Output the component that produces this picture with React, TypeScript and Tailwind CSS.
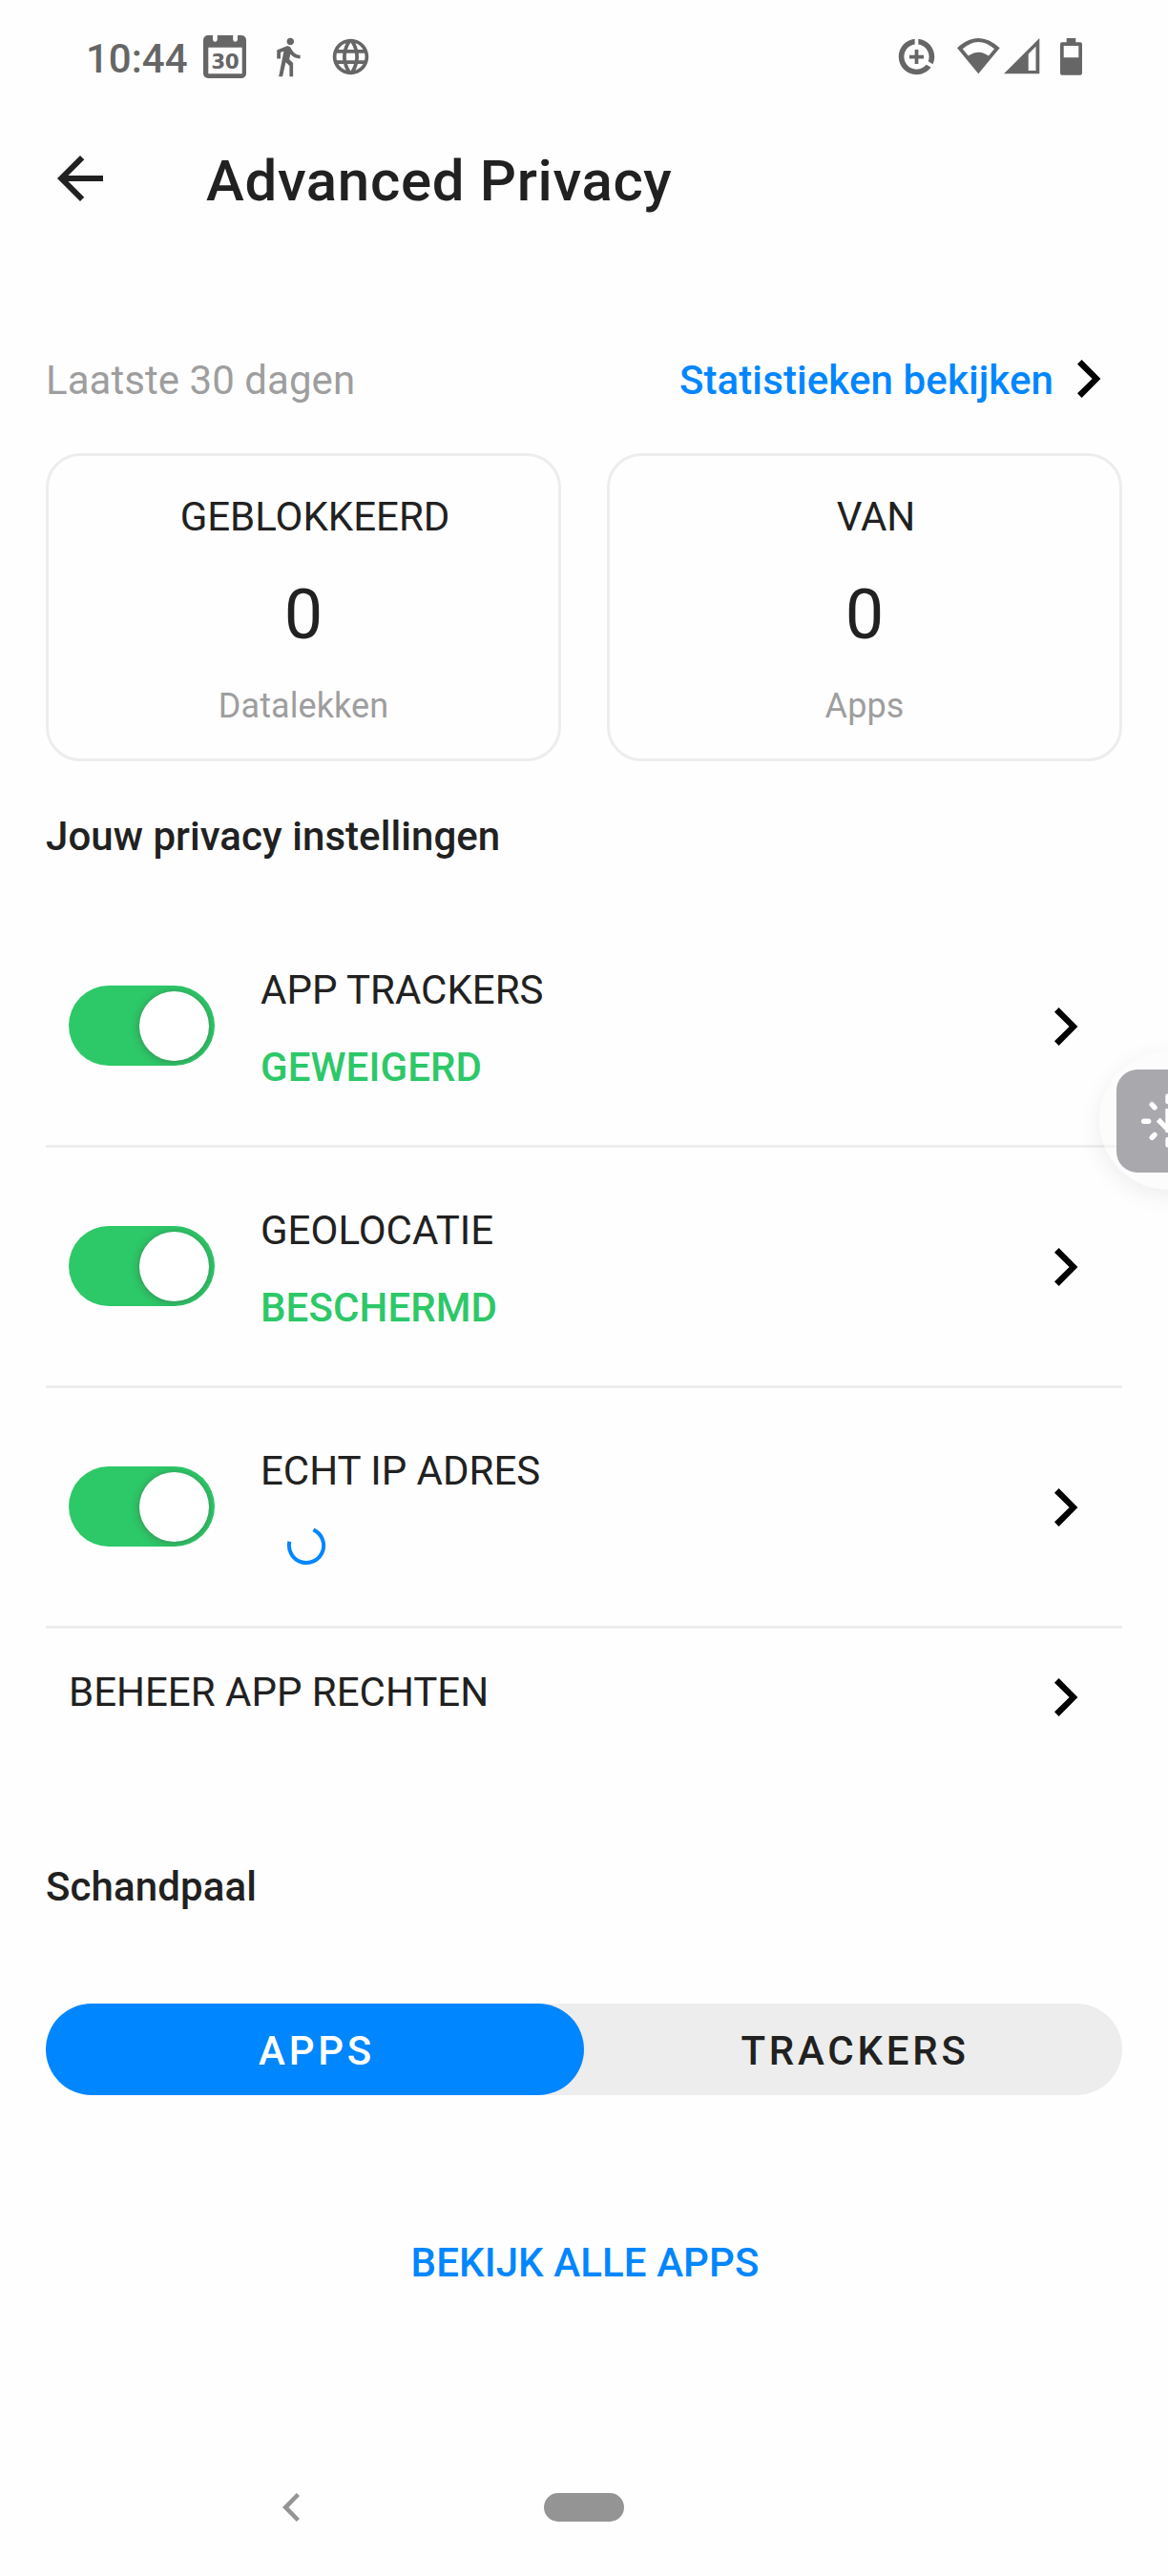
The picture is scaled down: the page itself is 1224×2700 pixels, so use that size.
import type { ReactNode } from "react";

function Chevron() {
  return (
    <svg className="block h-10 w-[25px] shrink-0" viewBox="0 0 25 40" fill="#000">
      <path d="M4.6 0 24.4 20 4.6 40 0 35.3 15.6 20 0 4.7z" />
    </svg>
  );
}

function StatusBar() {
  return (
    <div className="flex h-[120px] items-start pr-[90px] pl-[90px] pt-[37px] text-[#666666]">
      <span className="w-[123px] text-[42px] leading-[49px] font-medium">10:44</span>
      <div className="flex gap-[21px]">
        <svg className="size-[45px]" viewBox="0 0 45 45" fill="currentColor">
          <path
            fillRule="evenodd"
            d="M5 0h5v3.5a2.4 3.3 0 0 0 4.8 0V0h16.4v3.5a2.4 3.3 0 0 0 4.8 0V0h4a5 5 0 0 1 5 5v35a5 5 0 0 1-5 5H5a5 5 0 0 1-5-5V5a5 5 0 0 1 5-5zM5.3 12.7v27.6h35.4V12.7z"
          />
          <text x="22.9" y="34.6" fontSize="21.5" fontWeight="700" fontFamily="DejaVu Sans, sans-serif" textAnchor="middle" textLength="29.5">
            30
          </text>
        </svg>
        <svg className="size-[45px]" viewBox="0 0 24 24" fill="currentColor">
          <path d="M13.5 5.5c1.1 0 2-.9 2-2s-.9-2-2-2-2 .9-2 2 .9 2 2 2zM9.8 8.9L7 23h2.1l1.8-8 2.1 2v6h2v-7.5l-2.1-2 .6-3C14.8 12 16.8 13 19 13v-2c-1.9 0-3.5-1-4.3-2.4l-1-1.6c-.4-.6-1-1-1.7-1-.3 0-.5.1-.8.1L6 8.3V13h2V9.6l1.8-.7" />
        </svg>
        <svg className="size-[45px]" viewBox="0 0 24 24" fill="currentColor">
          <path d="M11.99 2C6.47 2 2 6.48 2 12s4.47 10 9.99 10C17.52 22 22 17.52 22 12S17.52 2 11.99 2zm6.93 6h-2.95c-.32-1.25-.78-2.45-1.38-3.56 1.84.63 3.37 1.91 4.33 3.56zM12 4.04c.83 1.2 1.48 2.53 1.91 3.96h-3.82c.43-1.43 1.08-2.76 1.91-3.96zM4.26 14C4.1 13.36 4 12.69 4 12s.1-1.36.26-2h3.38c-.08.66-.14 1.32-.14 2 0 .68.06 1.34.14 2H4.26zm.82 2h2.95c.32 1.25.78 2.45 1.38 3.56-1.84-.63-3.37-1.9-4.33-3.56zm2.95-8H5.08c.96-1.66 2.49-2.93 4.33-3.56C8.81 5.55 8.35 6.75 8.03 8zM12 19.96c-.83-1.2-1.48-2.53-1.91-3.96h3.82c-.43 1.43-1.08 2.76-1.91 3.96zM14.34 14H9.66c-.09-.66-.16-1.32-.16-2 0-.68.07-1.35.16-2h4.68c.09.65.16 1.32.16 2 0 .68-.07 1.34-.16 2zm.25 5.56c.6-1.11 1.06-2.31 1.38-3.56h2.95c-.96 1.65-2.49 2.93-4.33 3.56zM16.36 14c.08-.66.14-1.32.14-2 0-.68-.06-1.34-.14-2h3.38c.16.64.26 1.31.26 2s-.1 1.36-.26 2h-3.38z" />
        </svg>
      </div>
      <div className="ml-auto flex items-start">
        <svg className="mr-5 size-[45px]" viewBox="0 0 24 24" fill="currentColor">
          <path d="M11 8v3H8v2h3v3h2v-3h3v-2h-3V8h-2zM13 2.05v3.03c3.39.49 6 3.39 6 6.92 0 .9-.18 1.75-.48 2.54l2.6 1.53c.56-1.24.88-2.62.88-4.07 0-5.18-3.95-9.45-9-9.95zM12 19c-3.87 0-7-3.13-7-7 0-3.53 2.61-6.43 6-6.92V2.05c-5.06.5-9 4.76-9 9.95 0 5.52 4.47 10 9.99 10 3.31 0 6.24-1.61 8.06-4.09l-2.6-1.53C16.17 17.98 14.21 19 12 19z" />
        </svg>
        <svg className="mt-[3px] mr-[4px] h-[38px] w-[45px]" viewBox="0 0 45 38" fill="currentColor">
          <path
            fillRule="evenodd"
            d="M0 10.3Q22.3-10.3 44.7 10.3L22.3 37.3zM5.7 11.3 11.8 18.5Q22.4 10.9 33 18.5L39 11.3Q22.4-3.3 5.7 11.3z"
          />
        </svg>
        <svg className="mt-[3px] mr-[21px] h-[38px] w-[38px]" viewBox="0 0 38 38" fill="currentColor">
          <path fillRule="evenodd" d="M0 37.3H37.3V0zM25.7 34V16.4L33.5 8.8V34z" />
        </svg>
        <svg className="mt-[3px] h-[39px] w-[23px]" viewBox="0 0 23 39" fill="currentColor">
          <path
            fillRule="evenodd"
            d="M6.7 0h9.6v4.3h4.7a2 2 0 0 1 2 2v30.4a2 2 0 0 1-2 2H2a2 2 0 0 1-2-2V6.3a2 2 0 0 1 2-2h4.7zM3.7 8v12.3h15.6V8z"
          />
        </svg>
      </div>
    </div>
  );
}

function StatCard({ title, value, unit }: { title: string; value: string; unit: string }) {
  return (
    <div className="flex h-[323px] flex-col items-center rounded-[36px] border-[3px] border-[#ededed] pt-[39px]">
      <div className="pl-6 text-[42px] leading-[49px]">{title}</div>
      <div className="mt-9 text-[72px] leading-[85px]">{value}</div>
      <div className="mt-8 text-[36px] leading-[42px] tracking-[0.1px] text-[#9e9e9e]">{unit}</div>
    </div>
  );
}

function Toggle() {
  return (
    <div className="mt-[82px] flex h-[84px] w-[153px] shrink-0 items-start justify-end overflow-hidden rounded-full bg-[#2dc868] pt-[6px] pr-[6px]">
      <div className="size-[73px] rounded-full bg-white shadow-[0_1px_9px_rgba(60,60,60,0.45)]" />
    </div>
  );
}

function SettingRow({ title, children }: { title: string; children: ReactNode }) {
  return (
    <div className="flex h-[252px] items-start border-b-[3px] border-[#ededed] pr-[46px] pl-6">
      <Toggle />
      <div className="mt-[62px] ml-12 flex flex-1 flex-col">
        <div className="text-[42px] leading-[49px]">{title}</div>
        <div className="mt-8 flex h-[49px] items-start text-[42px] leading-[49px] font-medium tracking-[0.1px] text-[#2dc868]">
          {children}
        </div>
      </div>
      <div className="mt-[105px]">
        <Chevron />
      </div>
    </div>
  );
}

function Spinner() {
  return (
    <svg className="mt-[1px] ml-[27px] size-[42px]" viewBox="-21 -21 42 42" fill="none" stroke="#0086ff" strokeWidth="4">
      <path d="M7.4-16.6A18.1 18.1 0 1 1-17.6-4.2" />
    </svg>
  );
}

function FloatingButton() {
  return (
    <div className="absolute top-[1060px] right-0 h-[240px] w-[112px] overflow-hidden">
      <div className="absolute top-[42px] left-10 size-[145px] rounded-full bg-[#fafafa]/50 shadow-[0_6px_24px_rgba(0,0,0,0.07)]" />
      <div className="absolute top-[61px] left-[58px] h-[108px] w-[108px] rounded-[22px] bg-[#9e9fa4]/90">
        <svg className="h-[108px] w-[108px]" viewBox="0 0 108 108" fill="none" stroke="#fff" strokeWidth="5.4">
          <g strokeLinecap="round">
            <path d="M28.7 54.2h5M37.2 36.7l2.8 3.2M37.2 71.4l2.8-3M54 28v5.5M54 73.5V79" />
          </g>
          <path d="M54 41v25M43.7 52.5 54 63l10.3-10.5" />
        </svg>
      </div>
    </div>
  );
}

export default function App() {
  return (
    <div className="relative flex h-[2700px] w-[1224px] flex-col overflow-hidden bg-[#fefefe] font-['Roboto',sans-serif] text-[#212121]">
      <StatusBar />

      <header className="flex h-[134px] items-start pl-12 pt-[31px]">
        <svg className="size-[72px]" viewBox="0 0 24 24" fill="currentColor">
          <path d="M20 11H7.83l5.59-5.59L12 4l-8 8 8 8 1.41-1.41L7.83 13H20v-2z" />
        </svg>
        <h1 className="mt-[3px] ml-24 text-[60px] leading-[71px] font-medium tracking-[0.65px]">Advanced Privacy</h1>
      </header>

      <main className="flex flex-col px-12 pt-[120px]">
        <div className="flex h-[101px] items-start justify-between">
          <span className="text-[42px] leading-[49px] tracking-[0.05px] text-[#9e9e9e]">Laatste 30 dagen</span>
          <div className="mr-[22px] flex">
            <span className="text-[42px] leading-[49px] font-medium tracking-[0.1px] text-[#0086ff]">Statistieken bekijken</span>
            <div className="mt-[3px] ml-[25px]">
              <Chevron />
            </div>
          </div>
        </div>

        <div className="grid grid-cols-2 gap-12">
          <StatCard title="GEBLOKKEERD" value="0" unit="Datalekken" />
          <StatCard title="VAN" value="0" unit="Apps" />
        </div>

        <h2 className="mt-[54px] mb-[50px] text-[42px] leading-[49px] font-medium tracking-[0.06px]">Jouw privacy instellingen</h2>

        <SettingRow title="APP TRACKERS">GEWEIGERD</SettingRow>
        <SettingRow title="GEOLOCATIE">BESCHERMD</SettingRow>
        <SettingRow title="ECHT IP ADRES">
          <Spinner />
        </SettingRow>

        <div className="flex h-[144px] items-start pt-[42px] pr-[46px] pl-6">
          <span className="flex-1 text-[42px] leading-[49px]">BEHEER APP RECHTEN</span>
          <div className="mt-[10px]">
            <Chevron />
          </div>
        </div>

        <h2 className="mt-[102px] text-[42px] leading-[49px] font-medium tracking-[0.1px]">Schandpaal</h2>

        <div className="mt-[98px] grid h-24 grid-cols-2 rounded-full bg-[#ededed] text-center text-[42px] leading-[49px] font-medium tracking-[3.75px]">
          <div className="rounded-full bg-[#0086ff] pt-[25px] pl-1 text-white">APPS</div>
          <div className="pt-[25px] pl-1">TRACKERS</div>
        </div>

        <div className="mt-[151px] pl-[2px] text-center text-[42px] leading-[49px] font-medium tracking-[0.1px] text-[#0086ff]">
          BEKIJK ALLE APPS
        </div>
      </main>

      <nav className="mt-auto mb-[57px] flex items-center pl-[296px]">
        <svg className="h-[30px] w-[18px]" viewBox="0 0 18 30" fill="#949494">
          <path d="M14.8 0 18 3 6.5 15 18 27 14.8 30 0 15z" />
        </svg>
        <div className="ml-64 h-[30px] w-[84px] rounded-full bg-[#949494]" />
      </nav>

      <FloatingButton />
    </div>
  );
}
